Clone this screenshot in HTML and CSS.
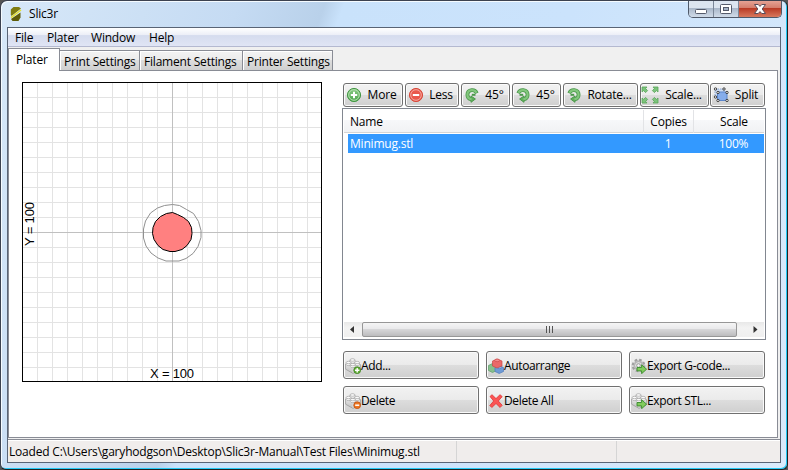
FILE: index.html
```html
<!DOCTYPE html>
<html lang="en">
<head>
<meta charset="utf-8">
<title>Slic3r</title>
<link rel="stylesheet" href="styles.css">
</head>
<body>
<svg class="defs" aria-hidden="true">
  <defs>
    <linearGradient id="green" x1="0" y1="0" x2="0" y2="1"><stop offset="0" stop-color="#8ccb86"/><stop offset="1" stop-color="#4ba54b"/></linearGradient>
    <linearGradient id="grey" x1="0" y1="0" x2="0" y2="1"><stop offset="0" stop-color="#f4f4f4"/><stop offset="1" stop-color="#bdbdbd"/></linearGradient>
    <symbol id="brick" viewBox="0 0 16 16">
      <path d="M.6 6 7 3l8.400 3.500v5.200L8 15.400.6 11.200z" fill="url(#grey)" stroke="#9c9c9c" stroke-width=".8"/>
      <path d="M8 9.800v5.400" fill="none" stroke="#ddd" stroke-width=".8"/>
      <g fill="#fafafa" stroke="#a2a2a2" stroke-width=".7"><path d="M5 2v2.200c0 1.400 5 1.400 5 0V2"/><ellipse cx="7.500" cy="2" rx="2.500" ry="1.300"/><path d="M1.200 4.500v2c0 1.400 4.600 1.400 4.600 0v-2"/><ellipse cx="3.500" cy="4.500" rx="2.300" ry="1.200"/><path d="M9.800 4.500v2c0 1.400 4.600 1.400 4.600 0v-2"/><ellipse cx="12.100" cy="4.500" rx="2.300" ry="1.200"/><path d="M5.400 6.600v2c0 1.400 4.800 1.400 4.800 0v-2"/><ellipse cx="7.800" cy="6.600" rx="2.400" ry="1.200"/></g>
    </symbol>
    <symbol id="arrow" viewBox="0 0 16 16"><path d="M6 9.500h4.600V6.800l5 4.400-5 4.500v-2.800H6z" fill="#82cb5c" stroke="#398b2d" stroke-width=".9"/></symbol>
    <symbol id="turn" viewBox="0 0 16 16">
      <g fill="none" stroke-linejoin="round">
        <path d="M3.200 6.200C4.400 3.700 6.500 3 8.300 3.200c2.600.3 4.300 2.200 4.300 4.600 0 2.500-1.600 4.200-4 4.700" stroke="#4b984b" stroke-width="3.800"/>
        <path d="M4.500 7.800h3.700" stroke="#4b984b" stroke-width="2"/>
        <path d="M9 9v6.300L4.600 12z" fill="#61b05c" stroke="#4b984b"/>
        <path d="M3.500 5.800C4.600 3.800 6.500 3.100 8.300 3.200c2.600.3 4.300 2.200 4.300 4.600 0 2.500-1.600 4.200-4.300 4.600" stroke="#82c67c" stroke-width="2.200"/>
      </g>
    </symbol>
  </defs>
</svg>
<div class="window">
  <header class="titlebar">
    <svg class="logo" width="12" height="16" viewBox="0 0 12 16"><path d="M3.500 1H9l2 1.500L1.500 10 .8 8.500V3.500z" fill="#7f7c10"/><path d="M10.500 6.500v5L8.500 15h-6L1 13z" fill="#5e5c08"/><path d="M1 11.700 11 4" stroke="#e5e02b" stroke-width="1.500"/></svg>
    <h1>Slic3r</h1>
    <div class="controls">
      <span class="min"><svg width="14" height="12" viewBox="0 0 14 12"><rect x="1.500" y="6.500" width="11" height="4" rx="1" fill="#fff" stroke="#555b6b"/></svg></span>
      <span class="max"><svg width="14" height="12" viewBox="0 0 14 12"><rect x="1.500" y="1.500" width="11" height="9" rx="1" fill="#fff" stroke="#555b6b"/><rect x="4.500" y="4.500" width="5" height="3" fill="#a5b3c6" stroke="#555b6b"/></svg></span>
      <span class="close"><svg width="14" height="12" viewBox="0 0 14 12"><path d="M1.500 1.500h3.700L7 3.400l1.800-1.900h3.700L9.200 6l3.300 4.500H8.800L7 8.600l-1.800 1.900H1.500L4.800 6z" fill="#fff" stroke="#5a4c5a"/></svg></span>
    </div>
  </header>
  <main class="client">
    <nav class="menu"><span class="m1">File</span><span class="m2">Plater</span><span class="m3">Window</span><span class="m4">Help</span></nav>
    <div class="tabs"><span class="tab active">Plater</span><span class="tab t2">Print Settings</span><span class="tab t3">Filament Settings</span><span class="tab t4">Printer Settings</span></div>
    <section class="page">
      <svg class="plate" width="300" height="300" viewBox="0 0 300 300">
        <defs><pattern id="grid" width="15" height="15" patternUnits="userSpaceOnUse"><path d="M0 .5h15M.5 0v15" stroke="#e3e3e3"/></pattern></defs>
        <rect width="300" height="300" fill="#fff"/><rect width="300" height="300" fill="url(#grid)"/>
        <path d="M150.500 0v300M0 150.500h300" stroke="#c0c0c0"/>
        <path d="m150.500 122.500 7 1 7 4 7 4 5 8 2.500 9v7l-3 9-5 7-7 5-7 2.500h-13l-8-3-7-5-5-7-2.500-8v-9l2-8 5-8 7-5 7-2.500z" fill="none" stroke="#909090"/>
        <path d="m150.500 130.500 5 2 6 3 5 4 3 6 .5 6-1 6-4 6-5 4-7 2h-5l-7-2-5-4-4-6-1.500-6 .5-6 2.500-6 5-5 6-3z" fill="#ff8080" stroke="#000"/>
        <rect x=".5" y=".5" width="299" height="299" fill="none" stroke="#000"/>
        <text x="128" y="296" textLength="44">X = 100</text>
        <text transform="translate(12 164) rotate(-90)" textLength="44">Y = 100</text>
      </svg>
      <div class="side">
        <div class="tools">
          <button class="b-more"><svg width="16" height="16" viewBox="0 0 16 16"><circle cx="8" cy="8" r="6.600" fill="url(#green)" stroke="#469846"/><circle cx="8" cy="8" r="5.300" fill="none" stroke="#b5dfb0"/><path d="M8 4.800v6.400M4.800 8h6.400" stroke="#fff" stroke-width="2"/></svg><span>More</span></button>
          <button class="b-less"><svg width="16" height="16" viewBox="0 0 16 16"><circle cx="8" cy="8" r="6.600" fill="#e9594c" stroke="#d64b3d"/><circle cx="8" cy="8" r="5.300" fill="none" stroke="#f5aaa0"/><path d="M4.800 8h6.400" stroke="#fff" stroke-width="2"/></svg><span>Less</span></button>
          <button class="b-ccw"><svg class="flip" width="16" height="16"><use href="#turn"/></svg><span>45°</span></button>
          <button class="b-cw"><svg width="16" height="16"><use href="#turn"/></svg><span>45°</span></button>
          <button class="b-rotate"><svg width="16" height="16"><use href="#turn"/></svg><span>Rotate...</span></button>
          <button class="b-scale"><svg width="18" height="18" viewBox="0 0 18 18"><g fill="#7cc47c" stroke="#58a558" stroke-width=".8"><path d="M1 1h5L4.600 2.600l2 2-2 2-2-2L1 6z"/><path d="M17 1h-5l1.400 1.600-2 2 2 2 2-2L17 6z"/><path d="M1 17h5l-1.400-1.600 2-2-2-2-2 2L1 12z"/><path d="M17 17h-5l1.400-1.600-2-2 2-2 2 2L17 12z"/></g></svg><span>Scale...</span></button>
          <button class="b-split"><svg width="16" height="16" viewBox="0 0 16 16"><path d="M2 2h9v8H2z" fill="#cddcf2" stroke="#8aa5d0" stroke-dasharray="1.500 1"/><path d="M4.500 5h9.500v8.500H4.500z" fill="#86adeb" stroke="#5b85cb"/><g fill="#eee" stroke="#333" stroke-width=".9"><circle cx="2.500" cy="2" r="1.200"/><circle cx="11" cy="2" r="1.200"/><circle cx="2.500" cy="10" r="1.200"/><circle cx="5" cy="5.500" r="1.200"/><circle cx="14" cy="5.500" r="1.200"/><circle cx="5" cy="13.500" r="1.200"/><circle cx="14" cy="13.500" r="1.200"/></g></svg><span>Split</span></button>
        </div>
        <div class="list">
          <div class="row head"><span>Name</span><span>Copies</span><span>Scale</span></div>
          <div class="row item"><span>Minimug.stl</span><span>1</span><span>100%</span></div>
          <div class="space"></div>
          <div class="scroll"><svg width="18" height="15" viewBox="0 0 18 15"><path d="M10 4v7L6 7.500z" fill="#333"/></svg><div class="thumb"><i></i><i></i><i></i></div><svg width="27" height="15" viewBox="0 0 27 15"><path d="M16.500 4v7l4-3.500z" fill="#333"/></svg></div>
        </div>
        <div class="actions">
          <button><svg width="16" height="16" viewBox="0 0 16 16"><use href="#brick"/><circle cx="12.200" cy="12.200" r="3.400" fill="#65ae3a" stroke="#3d8422" stroke-width=".8"/><path d="M12.200 10v4.400M10 12.200h4.400" stroke="#fff" stroke-width="1.400"/></svg><span>Add...</span></button>
          <button><svg width="16" height="16" viewBox="0 0 16 16"><path d="m.5 7.500 4-2 4 2v5l-4 2-4-2z" fill="#86bf8c" stroke="#5b9c67" stroke-width=".7"/><path d="m7 9.500 4.200-2 4.300 2v4l-4.300 2-4.200-2z" fill="#6f9bd6" stroke="#4c79bb" stroke-width=".7"/><ellipse cx="11.500" cy="9.500" rx="2.300" ry="1.200" fill="#8cb1e3" stroke="#4c79bb" stroke-width=".6"/><path d="m4.500 3 4.500-2 5 2v5L9 10 4.500 8z" fill="#ea6969" stroke="#c84848" stroke-width=".7"/><ellipse cx="9.200" cy="2.400" rx="2.500" ry="1.300" fill="#f58c8c" stroke="#cc4949" stroke-width=".7"/></svg><span>Autoarrange</span></button>
          <button><svg width="16" height="16" viewBox="0 0 16 16"><circle cx="7.500" cy="7.500" r="5.700" fill="#ccc" stroke="#a0a0a0" stroke-width="2.300" stroke-dasharray="2.500 1.970"/><circle cx="7.500" cy="7.500" r="4" fill="#ddd" stroke="#aaa"/><circle cx="7.500" cy="7.500" r="1.800" fill="#f5f5f5" stroke="#999"/><use href="#arrow"/></svg><span>Export G-code...</span></button>
          <button><svg width="16" height="16" viewBox="0 0 16 16"><use href="#brick"/><circle cx="12.200" cy="12.200" r="3.400" fill="#ed7723" stroke="#bd5012" stroke-width=".8"/><path d="M10.200 12.200h4" stroke="#fff" stroke-width="1.500"/></svg><span>Delete</span></button>
          <button><svg width="16" height="16" viewBox="0 0 16 16"><path d="M2 3.500 4 1.700 8 5.600 12 1.700l2.200 1.900L10.300 8l3.900 4.300-2.100 2.200L8 10.500l-4.200 4-2-2L5.700 8z" fill="#fb5555" stroke="#df3434" stroke-width=".8"/></svg><span>Delete All</span></button>
          <button><svg width="16" height="16" viewBox="0 0 16 16"><use href="#brick"/><use href="#arrow"/></svg><span>Export STL...</span></button>
        </div>
      </div>
    </section>
    <footer class="status"><span>Loaded C:\Users\garyhodgson\Desktop\Slic3r-Manual\Test Files\Minimug.stl</span><span></span><span></span></footer>
  </main>
</div>
</body>
</html>
```
FILE: styles.css
```css
* { box-sizing: border-box; }
body { margin: 0; width: 788px; height: 470px; overflow: hidden; background: #555; font: 12px/16px "Open Sans", "Noto Sans", sans-serif; letter-spacing: -.2px; color: #000; }
.defs { position: absolute; width: 0; height: 0; }
.window { width: 788px; height: 470px; border: 1px solid #3c4250; border-right-color: #222; border-bottom-color: #222; border-radius: 7px 7px 6px 6px; padding: 0 6px 6px 6px; background: linear-gradient(110deg, #d7e8f8 0, #c5dbf3 25%, #b9d1ea 34%, #c9e2fb 36%, #cbe3fc 60%, #d9eafb 100%); box-shadow: inset -1px -1px #23c9f5, inset 1px 1px #f5fbff; }
.titlebar { height: 26px; display: flex; align-items: flex-start; }
.logo { margin: 5px 0 0 3px; }
h1 { margin: 5px 0 0 7px; font-size: 12px; line-height: 16px; font-weight: 400; }
.controls { margin-left: auto; margin-right: -1px; display: flex; height: 17px; border: 1px solid #4f5969; border-top: 0; border-radius: 0 0 5px 5px; overflow: hidden; }
.controls span { display: flex; align-items: center; justify-content: center; border-right: 1px solid #7b8798; background: linear-gradient(#dce5f0 0 45%, #aab8ca 46%, #d0dbe8); width: 25px; }
.controls .close { width: 42px; border: 0; background: linear-gradient(#e5a294 0, #d37b6a 45%, #b93a25 46%, #d8795e); }
.client { width: 774px; height: 436px; border: 1px solid #596475; background: #f0f0f0; display: flex; flex-direction: column; }
.menu { flex: none; height: 19px; border-bottom: 1px solid #b4b9d0; background: linear-gradient(#fff, #eceff7 38%, #d5dcee 42%, #e0e5f5); display: flex; padding-left: 7px; }
.menu span { line-height: 20px; }
.m1 { width: 32px; } .m2 { width: 44px; } .m3 { width: 58px; }
.tabs { flex: none; height: 24px; display: flex; align-items: flex-end; position: relative; z-index: 1; }
.tab { height: 21px; border: 1px solid #898c95; border-left: 0; background: linear-gradient(#f3f3f3, #ebebeb 48%, #ddd 50%, #cfcfcf); padding: 2px 0 0 4px; line-height: 17px; white-space: nowrap; box-shadow: inset 1px 1px #fff; }
.tab.active { width: 52px; height: 23px; padding: 2px 0 0 7px; border-left: 1px solid #898c95; border-bottom: 0; background: #fff; }
.t2 { width: 80px; } .t3 { width: 103px; } .t4 { width: 90px; }
.page { flex: none; height: 368px; margin: -1px 2px 0 0; background: #fff; border: 1px solid #898c95; display: flex; padding: 11px 0 0 13px; }
.plate { flex: none; font: 13px "Liberation Sans", Arial, sans-serif; letter-spacing: 0; }
.side { margin-left: 20px; width: 424px; }
.tools { display: flex; gap: 2px; height: 26px; padding: 1px 0 0 1px; }
button { flex: none; font: inherit; letter-spacing: inherit; color: #000; border: 1px solid #707070; border-radius: 3px; padding: 0; display: flex; align-items: center; background: linear-gradient(#f2f2f2, #ebebeb 48%, #ddd 50%, #cfcfcf); box-shadow: inset 0 0 0 1px #fafafa; }
.tools button { height: 24px; padding: 0 0 0 2px; }
.tools svg { flex: none; }
.tools span { flex: 1; text-align: center; white-space: nowrap; }
.b-more { width: 60px; } .b-less { width: 54px; } .b-ccw, .b-cw { width: 49px; } .b-rotate { width: 75px; } .b-scale { width: 69px; } .b-split { width: 55px; margin-left: -1px; }
.tools .b-scale { padding-left: 0; }
.flip { transform: scaleX(-1); }
.list { width: 424px; height: 232px; border: 1px solid #828790; display: flex; flex-direction: column; padding: 1px 1px 2px; background: #fff; }
.row { display: grid; grid-template-columns: 299px 50px 1fr; line-height: 20px; }
.row span { padding-left: 6px; }
.row span + span { text-align: center; padding: 0; }
.row span:last-child { padding-left: 10px; }
.head { height: 23px; line-height: 23px; background: linear-gradient(#fff 45%, #f7f8fa 46%, #f1f2f4); border-bottom: 1px solid #d5d5d5; }
.head span + span { border-left: 1px solid #e2e3e6; }
.item { margin: 1px 0 0 4px; height: 19px; grid-template-columns: 295px 50px 1fr; background: #39f; color: #fff; }
.item span { padding-left: 2px; }
.space { flex: 1; }
.scroll { display: flex; height: 15px; background: linear-gradient(#e8e8e8, #f3f3f3 40%, #efefef); }
.thumb { flex: 1; border: 1px solid #979797; border-radius: 2px; background: linear-gradient(#f5f5f5, #e9e9eb 46%, #d6d6d8 50%, #bcbcbe); display: flex; gap: 2px; justify-content: center; align-items: center; }
.thumb i { width: 1px; height: 7px; background: #555; }
.actions { display: grid; grid-template-columns: repeat(3, 136px); gap: 7px; margin: 11px 0 0 1px; }
.actions button { height: 28px; padding: 1px 0 0 1px; white-space: nowrap; letter-spacing: -.36px; }
.status { flex: 1; min-height: 0; margin-top: 1px; border-top: 1px solid #898c95; display: flex; background: #f0edec; box-shadow: inset 0 1px #fff; padding-top: 1px; }
.status span { width: 160px; line-height: 22px; white-space: nowrap; border-right: 1px solid #d5d5d5; }
.status span:first-child { width: 449px; padding-left: 1px; }
.status span:last-child { border: 0; }
```
